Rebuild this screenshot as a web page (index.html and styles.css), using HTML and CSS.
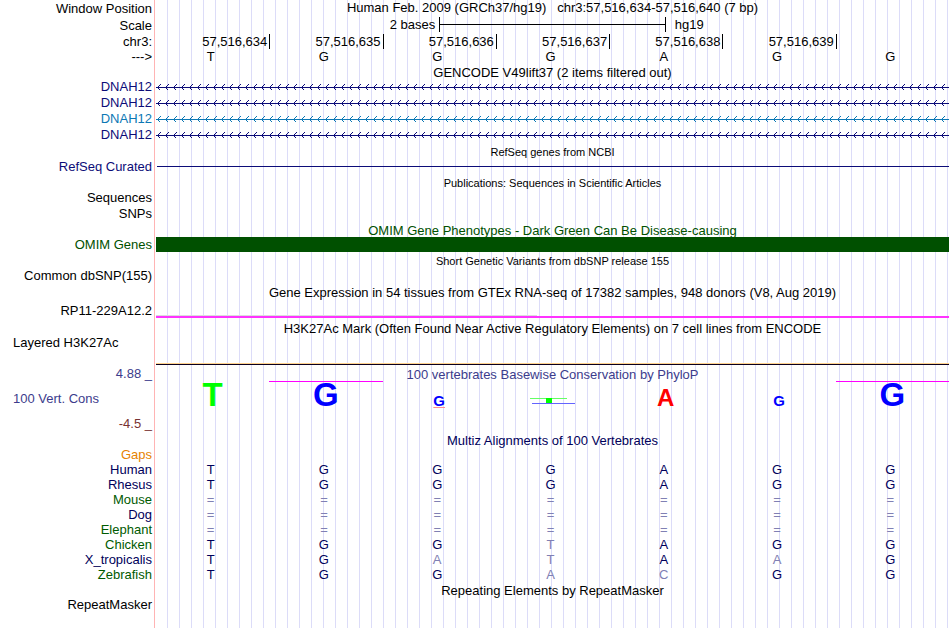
FILE: index.html
```html
<!DOCTYPE html>
<html lang="en">
  <head>
    <meta charset="UTF-8" />
    <title>Human chr3:57,516,634-57,516,640</title>
    <link rel="stylesheet" href="styles.css">
  </head>
  <body>
    <svg class="defs" width="0" height="0">
      <defs>
        <pattern id="arrows-navy" width="8" height="7" patternUnits="userSpaceOnUse">
          <path class="navy-stroke" d="M0 3.5H8M4.5 0.5L1.5 3.5L4.5 6.5" />
        </pattern>
        <pattern id="arrows-blue" width="8" height="7" patternUnits="userSpaceOnUse">
          <path class="blue-stroke" d="M0 3.5H8M4.5 0.5L1.5 3.5L4.5 6.5" />
        </pattern>
      </defs>
    </svg>

    <main class="browser">
      <!-- ruler -->
      <div class="row tall">
        <div class="label">Window Position</div>
        <h1 class="title position">Human Feb. 2009 (GRCh37/hg19) &nbsp; chr3:57,516,634-57,516,640 (7 bp)</h1>
      </div>
      <div class="row tall">
        <div class="label">Scale</div>
        <div class="scale">
          <span class="scale-size">2 bases</span>
          <span class="scale-bar"></span>
          <span class="scale-db">hg19</span>
        </div>
      </div>
      <div class="row coords">
        <div class="label">chr3:</div>
        <div class="bases ruler">
          <span>57,516,634</span>
          <span>57,516,635</span>
          <span>57,516,636</span>
          <span>57,516,637</span>
          <span>57,516,638</span>
          <span>57,516,639</span>
          <span></span>
        </div>
      </div>
      <div class="row short">
        <div class="label">---&gt;</div>
        <div class="bases">
          <span>T</span><span>G</span><span>G</span><span>G</span><span>A</span><span>G</span><span>G</span>
        </div>
      </div>

      <!-- genes -->
      <div class="row short">
        <h2 class="title">GENCODE V49lift37 (2 items filtered out)</h2>
      </div>
      <div class="row navy">
        <div class="label">DNAH12</div>
        <svg class="gene" height="7"><rect width="100%" height="7" fill="url(#arrows-navy)" /></svg>
      </div>
      <div class="row navy">
        <div class="label">DNAH12</div>
        <svg class="gene" height="7"><rect width="100%" height="7" fill="url(#arrows-navy)" /></svg>
      </div>
      <div class="row blue">
        <div class="label">DNAH12</div>
        <svg class="gene" height="7"><rect width="100%" height="7" fill="url(#arrows-blue)" /></svg>
      </div>
      <div class="row navy">
        <div class="label">DNAH12</div>
        <svg class="gene" height="7"><rect width="100%" height="7" fill="url(#arrows-navy)" /></svg>
      </div>
      <div class="row">
        <h2 class="title small">RefSeq genes from NCBI</h2>
      </div>
      <div class="row navy">
        <div class="label">RefSeq Curated</div>
        <div class="line"></div>
      </div>

      <!-- publications -->
      <div class="row short">
        <h2 class="title small">Publications: Sequences in Scientific Articles</h2>
      </div>
      <div class="row"><div class="label">Sequences</div></div>
      <div class="row"><div class="label">SNPs</div></div>

      <!-- variants -->
      <div class="row short green">
        <h2 class="title">OMIM Gene Phenotypes - Dark Green Can Be Disease-causing</h2>
      </div>
      <div class="row short green">
        <div class="label">OMIM Genes</div>
        <div class="block"></div>
      </div>
      <div class="row">
        <h2 class="title small">Short Genetic Variants from dbSNP release 155</h2>
      </div>
      <div class="row"><div class="label">Common dbSNP(155)</div></div>

      <!-- expression and regulation -->
      <div class="row">
        <h2 class="title">Gene Expression in 54 tissues from GTEx RNA-seq of 17382 samples, 948 donors (V8, Aug 2019)</h2>
      </div>
      <div class="row gtex">
        <div class="label">RP11-229A12.2</div>
        <div class="expression"><div class="expression-level"></div></div>
      </div>
      <div class="row">
        <h2 class="title">H3K27Ac Mark (Often Found Near Active Regulatory Elements) on 7 cell lines from ENCODE</h2>
      </div>
      <div class="row histone">
        <div class="label left">Layered H3K27Ac</div>
        <div class="signal"></div>
      </div>

      <!-- conservation -->
      <div class="row short cons">
        <div class="label">4.88 _</div>
        <h2 class="title">100 vertebrates Basewise Conservation by PhyloP</h2>
      </div>
      <div class="row phylop">
        <div class="label left">100 Vert. Cons</div>
        <div class="bases logo">
          <span class="base-t">T</span>
          <span class="base-g clipped">G</span>
          <span class="base-g"><b class="low under">G</b></span>
          <span>
            <svg width="45" height="9">
              <path class="weak-t" d="M0 1.5H37" />
              <rect class="weak-stem" x="16" y="1" width="6" height="5" />
              <path class="weak-g" d="M2 6.5H45" />
            </svg>
          </span>
          <span class="base-a"><b class="mid">A</b></span>
          <span class="base-g"><b class="low">G</b></span>
          <span class="base-g clipped">G</span>
        </div>
      </div>
      <div class="row minus">
        <div class="label">-4.5 _</div>
      </div>

      <!-- multiple alignment -->
      <div class="row short ink">
        <h2 class="title">Multiz Alignments of 100 Vertebrates</h2>
      </div>
      <table class="multiz">
        <tr><th class="gaps">Gaps</th><td></td><td></td><td></td><td></td><td></td><td></td><td></td></tr>
        <tr><th>Human</th><td>T</td><td>G</td><td>G</td><td>G</td><td>A</td><td>G</td><td>G</td></tr>
        <tr><th>Rhesus</th><td>T</td><td>G</td><td>G</td><td>G</td><td>A</td><td>G</td><td>G</td></tr>
        <tr class="unaligned"><th class="alt">Mouse</th><td>=</td><td>=</td><td>=</td><td>=</td><td>=</td><td>=</td><td>=</td></tr>
        <tr class="unaligned"><th>Dog</th><td>=</td><td>=</td><td>=</td><td>=</td><td>=</td><td>=</td><td>=</td></tr>
        <tr class="unaligned"><th class="alt">Elephant</th><td>=</td><td>=</td><td>=</td><td>=</td><td>=</td><td>=</td><td>=</td></tr>
        <tr><th class="alt">Chicken</th><td>T</td><td>G</td><td>G</td><td class="diff">T</td><td>A</td><td>G</td><td>G</td></tr>
        <tr><th>X_tropicalis</th><td>T</td><td>G</td><td class="diff">A</td><td class="diff">T</td><td>A</td><td class="diff">A</td><td>G</td></tr>
        <tr><th class="alt">Zebrafish</th><td>T</td><td>G</td><td>G</td><td class="diff">A</td><td class="diff">C</td><td>G</td><td>G</td></tr>
      </table>

      <!-- repeats -->
      <div class="row short">
        <h2 class="title">Repeating Elements by RepeatMasker</h2>
      </div>
      <div class="row"><div class="label">RepeatMasker</div></div>
    </main>
  </body>
</html>
```
FILE: styles.css
```css
* {
  margin: 0;
  padding: 0;
  box-sizing: border-box;
}

body {
  font-family: "Liberation Sans", Arial, sans-serif;
  font-size: 13px;
  line-height: 16px;
  color: #000;
  background: #fff;
}

.defs {
  position: absolute;
}

/* pink divider, blank label column, then a guide line every 12px */
.browser {
  min-height: 100vh;
  padding-right: 1px;
  background:
    linear-gradient(#ffb4b4, #ffb4b4) 154px 0 / 1px 100% no-repeat,
    linear-gradient(#fff, #fff) 0 0 / 166px 100% no-repeat,
    linear-gradient(90deg, #dcdcf8 1px, transparent 1px) 11px 0 / 12px 100% repeat-x;
}

.row {
  display: grid;
  grid-template-columns: 156px 1fr;
  height: 16px;
}

.row.short {
  height: 15px;
  line-height: 15px;
}

.row.tall {
  height: 17px;
  line-height: 17px;
}

.row.coords {
  height: 15px;
}

.label {
  grid-column: 1;
  padding-right: 4px;
  text-align: right;
  white-space: nowrap;
}

.label.left {
  padding-left: 13px;
  text-align: left;
}

.title {
  grid-column: 2;
  padding-top: 1px;
  font-size: 13px;
  font-weight: normal;
  text-align: center;
  white-space: nowrap;
}

.title.small {
  font-size: 11px;
}

.title.position {
  padding-top: 0;
  line-height: 15px;
}

.navy {
  color: #0c0c78;
}

.blue {
  color: #0c78b4;
}

.green {
  color: #005000;
}

.ink {
  color: #00005a;
}

/* ruler */
.scale {
  display: grid;
  grid-template-columns: 5fr 4fr 5fr;
  line-height: 15px;
}

.scale-size {
  padding-right: 4px;
  text-align: right;
}

.scale-bar {
  height: 15px;
  border: solid #000;
  border-width: 0 1px;
  background: linear-gradient(#000, #000) 0 7px / 100% 1px no-repeat;
}

.scale-db {
  padding-left: 9px;
}

.bases {
  display: grid;
  grid-template-columns: repeat(7, 1fr);
}

.bases span {
  padding-right: 4px;
  text-align: center;
}

.bases.ruler span {
  height: 15px;
  padding-right: 2px;
  text-align: right;
}

.bases.ruler span + span {
  border-left: 1px solid #000;
}

/* genes */
.gene {
  width: 100%;
  align-self: center;
}

.navy-stroke,
.blue-stroke {
  fill: none;
  shape-rendering: crispEdges;
}

.navy-stroke {
  stroke: #0c0c78;
}

.blue-stroke {
  stroke: #0c78b4;
}

.line {
  height: 1px;
  margin: 7px 0 0 1px;
  background: #0c0c78;
}

.block {
  background: #005000;
}

/* expression and histone marks */
.row.gtex {
  height: 20px;
  line-height: 22px;
}

.expression {
  align-self: end;
  margin-bottom: 4px;
  border-bottom: 2px solid #ff33ff;
}

.expression-level {
  width: 48%;
  height: 1px;
  background: #dcdcdc;
}

.row.histone {
  height: 30px;
  line-height: 14px;
}

.signal {
  align-self: end;
  height: 2px;
  margin-bottom: 1px;
  border-top: 1px solid #ffd28c;
  background: #0c001e;
}

/* conservation */
.cons,
.phylop {
  color: #3c3c8c;
}

.row.phylop {
  height: 35px;
  line-height: 35px;
}

.minus {
  color: #783232;
}

.row .logo {
  font-size: 33px;
  font-weight: bold;
  line-height: 26px;
}

.bases.logo span {
  height: 30px;
  padding-right: 0;
  border-top: 1px solid transparent;
}

.bases.logo .clipped {
  border-top-color: #f0f;
}

.base-t {
  color: #0f0;
}

.base-g {
  color: #00f;
}

.base-a {
  color: #f00;
}

.low {
  font-size: 15px;
}

.mid {
  font-size: 24px;
}

.under {
  text-decoration: underline 1px #ff8c8c;
}

.weak-t {
  stroke: #64ff64;
}

.weak-stem {
  fill: #0f0;
}

.weak-g {
  stroke: #6464ff;
}

/* alignment */
.multiz {
  width: 100%;
  table-layout: fixed;
  border-collapse: collapse;
  line-height: 15px;
  color: #00005a;
}

.multiz th {
  width: 156px;
  padding-right: 4px;
  font-weight: normal;
  text-align: right;
}

.multiz td {
  height: 15px;
  padding-right: 4px;
  text-align: center;
}

.multiz .gaps {
  color: #e68200;
}

.multiz .alt {
  color: #005a00;
}

.multiz .diff,
.unaligned td {
  color: #8080b4;
}
```
